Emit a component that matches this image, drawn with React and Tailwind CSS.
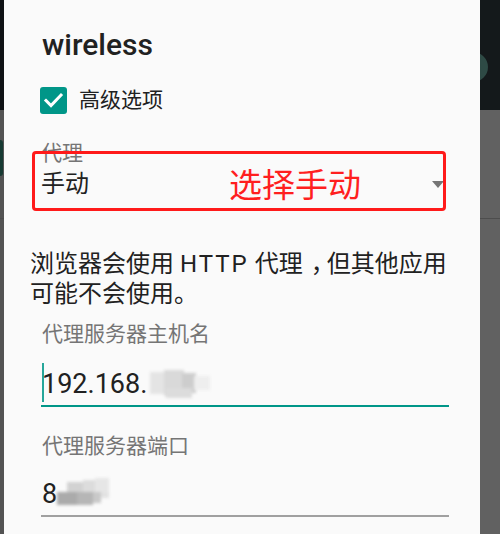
import React from 'react';

const font = { fontFamily: 'Roboto, "Noto Sans CJK SC", sans-serif' };

const SideStrip = ({ side }) => {
    const left = side === 'left';
    return (
        <div className={`relative flex flex-col overflow-hidden ${left ? 'w-[4px]' : 'w-[20px]'}`}>
            <div className={`h-[110px] shrink-0 ${left ? 'bg-[#0f1214]' : 'bg-[#14191b]'} pt-[52px]`}>
                {!left && <div className="w-[30px] h-[30px] -ml-[22px] rounded-full bg-[#2e4a45]"></div>}
            </div>
            <div className={`h-[108px] shrink-0 ${left ? 'bg-[#535353]' : 'bg-[#616161]'} pt-[30px]`}>
                {left && <div className="w-[3px] h-[36px] rounded-r-full bg-[#173a33]"></div>}
            </div>
            <div className="h-px shrink-0 bg-[#4d4d4d]"></div>
            <div className={`flex-1 ${left ? 'bg-[#535353]' : 'bg-[#616161]'}`}></div>
        </div>
    );
};

const Blur = ({ blocks, className }) => (
    <div className={`absolute blur-[1.5px] ${className}`}>
        {blocks.map((b, i) => (
            <div key={i} className="absolute" style={{ left: b[0], top: b[1], width: b[2], height: b[3], background: b[4] }}></div>
        ))}
    </div>
);

export default function App() {
    return (
        <div className="w-[500px] h-[534px] flex overflow-hidden bg-[#535353]" style={font}>
            <SideStrip side="left" />
            <div className="relative z-10 w-[476px] h-full bg-[#fafafa] pl-[37px] pr-[31px] pt-[27px] flex flex-col">
                <h1 className="ml-[1px] text-[30px] leading-[36px] font-medium text-[#212121]">wireless</h1>

                <div className="mt-[24px] -ml-[1px] h-[27px] flex items-center gap-[12px]">
                    <div className="w-[27px] h-[27px] rounded-[3px] bg-[#009688] flex items-center justify-center">
                        <svg width="27" height="27" viewBox="0 0 27 27">
                            <polyline points="6,13.5 11,18.5 21,8" fill="none" stroke="#fff" strokeWidth="3" strokeLinecap="square" />
                        </svg>
                    </div>
                    <span className="text-[21px] leading-[27px] text-[#212121]">高级选项</span>
                </div>

                <div className="relative mt-[26px]">
                    <p className="text-[21px] leading-[26px] text-[#757575]">代理</p>
                    <div className="mt-[3px] flex items-center justify-between">
                        <span className="text-[24px] leading-[30px] text-[#212121]">手动</span>
                        <svg className="mr-[5px]" width="12" height="7" viewBox="0 0 12 7">
                            <polygon points="0,0 12,0 6,7" fill="#757575" />
                        </svg>
                    </div>
                    <div className="absolute left-[-9px] top-[11px] w-[414px] h-[60px] border-[3px] border-[#ff1a1a] rounded-[4px]"></div>
                    <span className="absolute left-[188px] top-[29px] text-[33px] leading-[33px] text-[#ff1f1f] whitespace-nowrap">选择手动</span>
                </div>

                <p className="mt-[50px] -ml-[11px] text-[24px] leading-[30px] text-[#212121] whitespace-nowrap">
                    浏览器会使用 <span className="tracking-[2px]">HTTP</span> 代理<span className="pl-[8px] pr-[8px] tracking-[-16px]">，</span>但其他应用<br />可能不会使用。
                </p>

                <p className="mt-[12px] ml-[1px] text-[21px] leading-[26px] text-[#757575]">代理服务器主机名</p>
                <div className="relative mt-[19px] pl-[1px] text-[27px] leading-[36px] text-[#212121]">
                    192.168.
                    <div className="absolute left-[1px] top-[-3px] w-[2px] h-[39px] bg-[#26a69a]"></div>
                    <Blur
                        className="left-[107px] top-[4px] w-[64px] h-[28px]"
                        blocks={[
                            [2, 2, 16, 22, '#e4e4e4'],
                            [16, 0, 20, 26, '#d9d9d9'],
                            [34, 3, 14, 20, '#cdcdcd'],
                            [46, 6, 16, 14, '#eeeeee'],
                            [18, 18, 26, 10, '#dcdcdc'],
                        ]}
                    />
                </div>
                <div className="mt-[3px] h-[2px] bg-[#009688]"></div>

                <p className="mt-[26px] ml-[1px] text-[21px] leading-[26px] text-[#757575]">代理服务器端口</p>
                <div className="relative mt-[17px] pl-[1px] text-[27px] leading-[36px] text-[#212121]">
                    8
                    <Blur
                        className="left-[14px] top-[2px] w-[54px] h-[28px]"
                        blocks={[
                            [12, 4, 16, 12, '#d2d2d2'],
                            [28, 2, 12, 14, '#dcdcdc'],
                            [40, 0, 14, 18, '#e6e6e6'],
                            [2, 14, 20, 13, '#ababab'],
                            [22, 14, 16, 13, '#b6b6b6'],
                            [38, 14, 8, 11, '#c9c9c9'],
                            [46, 14, 8, 6, '#e2e2e2'],
                        ]}
                    />
                </div>
                <div className="mt-[3px] h-[2px] bg-[#a0a0a0]"></div>
            </div>
            <SideStrip side="right" />
        </div>
    );
}
